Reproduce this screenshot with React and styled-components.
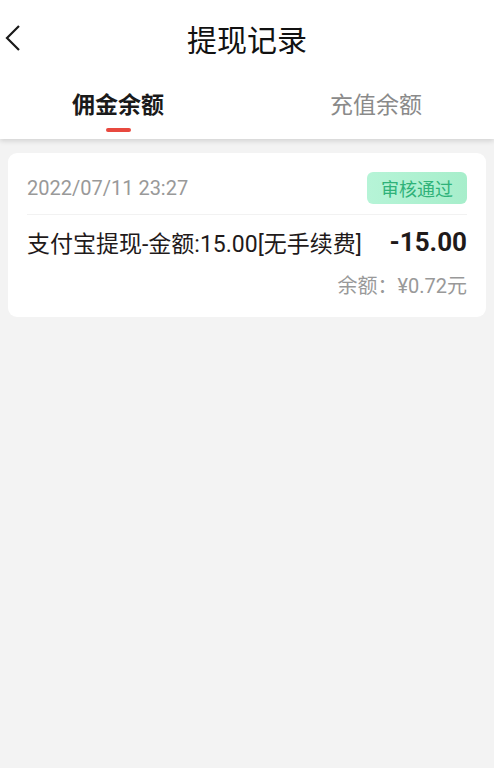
import React, { useState } from 'react'
import styled, { createGlobalStyle } from 'styled-components'

const GlobalStyle = createGlobalStyle`
  html, body {
    margin: 0;
    padding: 0;
    background: #f3f3f3;
    font-family: Roboto, "Noto Sans CJK SC", sans-serif;
  }
`

const Page = styled.div`
  min-height: 768px;
  background: #f3f3f3;
`

const Header = styled.div`
  background: #fff;
  box-shadow: 0 2px 5px rgba(0, 0, 0, 0.14);
  position: relative;
  z-index: 1;
`

const TitleBar = styled.div`
  height: 76px;
  display: grid;
  grid-template-columns: 60px 1fr 60px;
  align-items: center;
`

const BackButton = styled.button`
  border: 0;
  background: none;
  padding: 0 0 0 4px;
  height: 40px;
  display: flex;
  align-items: center;
  cursor: pointer;
`

const Title = styled.h1`
  margin: 0;
  text-align: center;
  font-size: 30px;
  font-weight: 400;
  color: #111;
  font-family: "Noto Sans CJK SC", sans-serif;
`

const Tabs = styled.div`
  display: grid;
  grid-template-columns: 236px 1fr;
  height: 63px;
`

const Tab = styled.div`
  display: flex;
  flex-direction: column;
  align-items: center;
  padding-left: ${p => (p.$offset ? `${p.$offset}px` : 0)};
  padding-top: 10px;
  line-height: 34px;
  font-family: "Noto Sans CJK SC", sans-serif;
  font-size: 23px;
  font-weight: ${p => (p.$active ? 700 : 400)};
  color: ${p => (p.$active ? '#1a1a1a' : '#8a8a8a')};
  cursor: pointer;
`

const Indicator = styled.span`
  display: block;
  width: 25px;
  height: 4px;
  margin-top: 8px;
  border-radius: 2px;
  background: ${p => (p.$show ? '#e8493f' : 'transparent')};
`

const List = styled.div`
  padding: 14px 8px;
`

const Card = styled.div`
  background: #fff;
  border-radius: 9px;
  padding: 19px 19px 18px 19px;
`

const TopRow = styled.div`
  display: flex;
  justify-content: space-between;
  align-items: center;
  padding-bottom: 10px;
  border-bottom: 1px solid #f2f2f2;
`

const DateText = styled.span`
  font-size: 20px;
  color: #999;
`

const Badge = styled.span`
  width: 100px;
  height: 32px;
  display: flex;
  align-items: center;
  justify-content: center;
  border-radius: 6px;
  background: linear-gradient(90deg, #b6f4d7, #a7eecb);
  color: #2fb279;
  font-size: 18px;
  font-family: "Noto Sans CJK SC", sans-serif;
`

const MainRow = styled.div`
  display: flex;
  justify-content: space-between;
  align-items: center;
  margin-top: 10px;
`

const Desc = styled.span`
  font-size: 23px;
  color: #1f1a1a;
  font-family: Roboto, "Noto Sans CJK SC", sans-serif;
`

const Amount = styled.span`
  font-size: 26px;
  font-weight: 700;
  color: #1f1a1a;
`

const Balance = styled.div`
  text-align: right;
  margin-top: 11px;
  font-size: 20px;
  color: #999;
  font-family: Roboto, "Noto Sans CJK SC", sans-serif;
`

const records = [
  {
    date: '2022/07/11 23:27',
    status: '审核通过',
    desc: '支付宝提现-金额:15.00[无手续费]',
    amount: '-15.00',
    balance: '余额：¥0.72元',
  },
]

export default function App() {
  const [tab, setTab] = useState(0)
  return (
    <Page>
      <GlobalStyle />
      <Header>
        <TitleBar>
          <BackButton aria-label="back">
            <svg width="18" height="28" viewBox="0 0 18 28" fill="none">
              <path d="M15 2 L3 14 L15 26" stroke="#1a1a1a" strokeWidth="2.2" />
            </svg>
          </BackButton>
          <Title>提现记录</Title>
          <span />
        </TitleBar>
        <Tabs>
          <Tab $active={tab === 0} onClick={() => setTab(0)}>
            佣金余额
            <Indicator $show={tab === 0} />
          </Tab>
          <Tab $active={tab === 1} $offset={22} onClick={() => setTab(1)}>
            充值余额
            <Indicator $show={tab === 1} />
          </Tab>
        </Tabs>
      </Header>
      <List>
        {records.map(r => (
          <Card key={r.date}>
            <TopRow>
              <DateText>{r.date}</DateText>
              <Badge>{r.status}</Badge>
            </TopRow>
            <MainRow>
              <Desc>{r.desc}</Desc>
              <Amount>{r.amount}</Amount>
            </MainRow>
            <Balance>{r.balance}</Balance>
          </Card>
        ))}
      </List>
    </Page>
  )
}
